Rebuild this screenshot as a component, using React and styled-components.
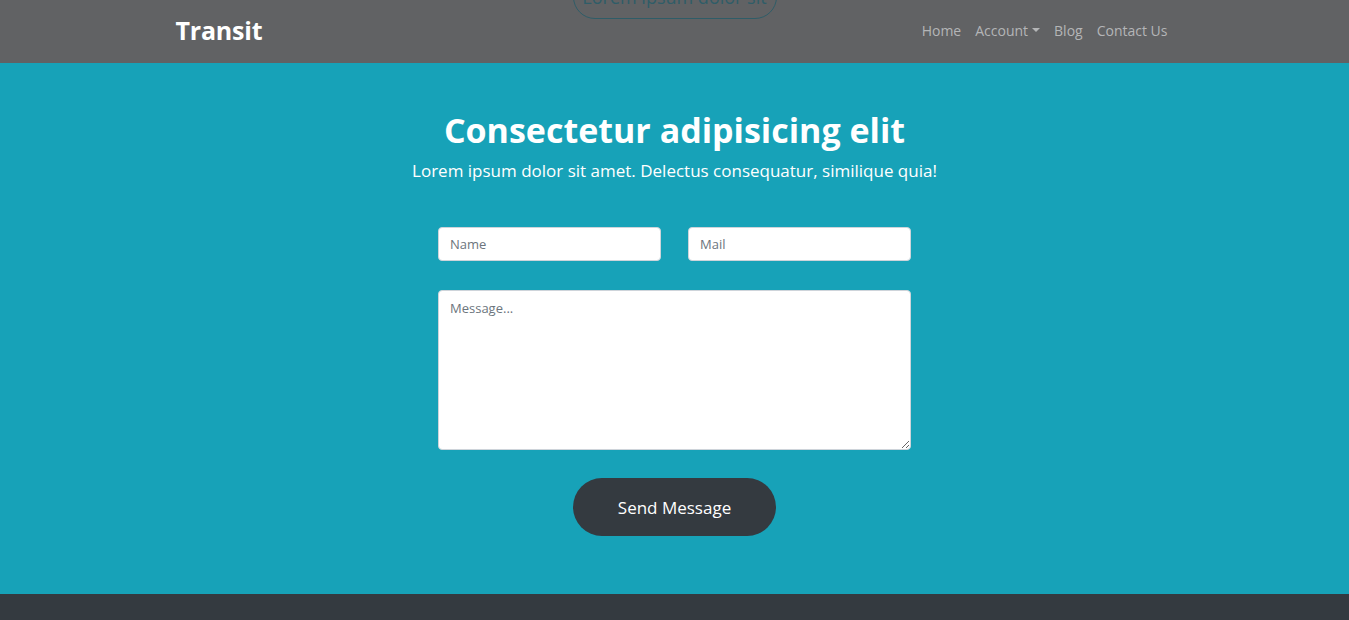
import styled, { createGlobalStyle } from 'styled-components';

const GlobalStyle = createGlobalStyle`
	html, body {
		margin: 0;
		padding: 0;
		background: #343a40;
	}

	body {
		font-family: 'Open Sans', 'Liberation Sans', sans-serif;
		color: #212529;
		overflow: hidden;
	}

	* {
		box-sizing: border-box;
	}
`;

const Page = styled.div`
	width: 100%;
	min-height: 620px;
	display: flex;
	flex-direction: column;
	background: #343a40;
`;

const Navbar = styled.header`
	position: relative;
	height: 63px;
	background: #616264;
	overflow: hidden;
`;

const NavInner = styled.nav`
	position: relative;
	z-index: 1;
	width: 1000px;
	height: 100%;
	margin: 0 auto;
	display: flex;
	align-items: center;
	justify-content: space-between;
`;

const Brand = styled.a`
	font-size: 25px;
	font-weight: 700;
	color: #fff;
	text-decoration: none;
	letter-spacing: -0.2px;
	margin-top: -4px;
	margin-left: 1px;
`;

const NavList = styled.ul`
	display: flex;
	list-style: none;
	margin: -2px 0 0;
	padding: 0;
`;

const NavLink = styled.a`
	display: flex;
	align-items: center;
	padding: 0 7px;
	font-size: 14px;
	font-weight: 500;
	color: #b4b5b7;
	text-decoration: none;
`;

const Caret = styled.span`
	display: inline-block;
	margin-left: 4px;
	margin-top: -2px;
	border-top: 4px solid #b4b5b7;
	border-left: 4px solid transparent;
	border-right: 4px solid transparent;
`;

const GhostButton = styled.div`
	position: absolute;
	left: 50%;
	top: -25px;
	transform: translateX(-50%);
	width: 204px;
	height: 44px;
	border: 1px solid #2f5d68;
	border-radius: 999px;
	display: flex;
	align-items: center;
	justify-content: center;
	font-size: 18px;
	color: #2f5d68;
`;

const Hero = styled.section`
	height: 531px;
	background: #17a2b8;
	display: flex;
	flex-direction: column;
	align-items: center;
	padding-top: 47px;
	color: #fff;
`;

const Title = styled.h1`
	margin: 0;
	font-size: 34px;
	font-weight: 700;
	line-height: 1.2;
`;

const Lead = styled.p`
	margin: 7px 0 0;
	font-size: 17px;
	line-height: 1.5;
`;

const Form = styled.form`
	width: 473px;
	margin-top: 44px;
	display: flex;
	flex-direction: column;
	align-items: center;
	gap: 28px;
`;

const Row = styled.div`
	width: 100%;
	display: flex;
	justify-content: space-between;
	margin-bottom: 1px;
`;

const Input = styled.input`
	width: 223px;
	height: 34px;
	padding: 0 11px;
	border: 1px solid #ced4da;
	border-radius: 4px;
	background: #fff;
	font-family: inherit;
	font-size: 13px;
	color: #495057;

	&::placeholder {
		color: #6c757d;
	}
`;

const TextArea = styled.textarea`
	width: 100%;
	height: 160px;
	padding: 8px 11px;
	border: 1px solid #ced4da;
	border-radius: 4px;
	background: #fff;
	font-family: inherit;
	font-size: 13px;
	color: #495057;
	resize: vertical;

	&::placeholder {
		color: #6c757d;
	}
`;

const SendButton = styled.button`
	width: 203px;
	height: 58px;
	border: none;
	border-radius: 999px;
	background: #343a40;
	color: #fff;
	font-family: inherit;
	font-size: 17px;
	cursor: pointer;
`;

const Footer = styled.footer`
	flex: 1;
	background: #343a40;
`;

const App = () => {
	return (
		<Page>
			<GlobalStyle />
			<Navbar>
				<GhostButton>Lorem ipsum dolor sit</GhostButton>
				<NavInner>
					<Brand href='#'>Transit</Brand>
					<NavList>
						<li><NavLink href='#'>Home</NavLink></li>
						<li>
							<NavLink href='#'>
								Account
								<Caret />
							</NavLink>
						</li>
						<li><NavLink href='#'>Blog</NavLink></li>
						<li><NavLink href='#'>Contact Us</NavLink></li>
					</NavList>
				</NavInner>
			</Navbar>
			<Hero>
				<Title>Consectetur adipisicing elit</Title>
				<Lead>Lorem ipsum dolor sit amet. Delectus consequatur, similique quia!</Lead>
				<Form onSubmit={(e) => e.preventDefault()}>
					<Row>
						<Input type='text' placeholder='Name' />
						<Input type='email' placeholder='Mail' />
					</Row>
					<TextArea placeholder='Message...' />
					<SendButton type='submit'>Send Message</SendButton>
				</Form>
			</Hero>
			<Footer />
		</Page>
	);
};

export default App;
